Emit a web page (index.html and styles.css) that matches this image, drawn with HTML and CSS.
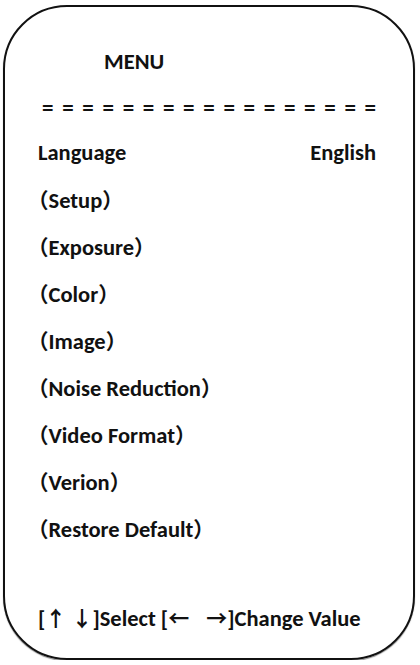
FILE: index.html
```html
<!DOCTYPE html>
<html>
<head>
<meta charset="utf-8">
<link rel="stylesheet" href="styles.css">
</head>
<body>
<div class="panel">
  <div class="title">MENU</div>
  <div class="rule">= = = = = = = = = = = = = = = = =</div>
  <div class="row split"><span>Language</span><span>English</span></div>
  <div class="row"><span class="p">（</span>Setup<span class="p">）</span></div>
  <div class="row"><span class="p">（</span>Exposure<span class="p">）</span></div>
  <div class="row"><span class="p">（</span>Color<span class="p">）</span></div>
  <div class="row"><span class="p">（</span>Image<span class="p">）</span></div>
  <div class="row"><span class="p">（</span>Noise Reduction<span class="p">）</span></div>
  <div class="row"><span class="p">（</span>Video Format<span class="p">）</span></div>
  <div class="row"><span class="p">（</span>Verion<span class="p">）</span></div>
  <div class="row"><span class="p">（</span>Restore Default<span class="p">）</span></div>
  <div class="row footer">[<span class="ar">↑</span> <span class="ar">↓</span>]Select [<span class="ar">←</span> <span class="ar gap">→</span>]Change Value</div>
</div>
</body>
</html>
```
FILE: styles.css
```css
html, body {
  margin: 0;
  padding: 0;
  background: #fff;
}
.panel {
  box-sizing: border-box;
  margin: 5px 0 0 3px;
  width: 412px;
  height: 655px;
  border: 2px solid #111;
  border-radius: 64px;
  box-shadow: 0 1px 1px rgba(0,0,0,0.45);
  padding: 31px 37px 17px 33px;
  display: flex;
  flex-direction: column;
  font-family: Carlito, Lato, "Noto Sans", sans-serif;
  font-weight: 700;
  font-size: 22.5px;
  color: #111;
}
.title {
  line-height: 47px;
  height: 47px;
  margin-left: 66px;
}
.rule {
  height: 44px;
  line-height: 44px;
  margin: 0 0 0 4px;
  font-size: 23px;
  text-align: justify;
  text-align-last: justify;
  white-space: nowrap;
}
.row {
  height: 47px;
  line-height: 47px;
  white-space: nowrap;
}
.split {
  display: flex;
  justify-content: space-between;
}
.p {
  font-family: "Noto Sans CJK SC", sans-serif;
  font-weight: 700;
  font-size: 21px;
  font-feature-settings: "halt";
}
.footer {
  margin-top: auto;
}
.ar {
  font-family: "Noto Sans CJK SC", sans-serif;
  font-weight: 700;
  font-size: 21px;
}
.gap {
  margin-left: 12px;
}
```
